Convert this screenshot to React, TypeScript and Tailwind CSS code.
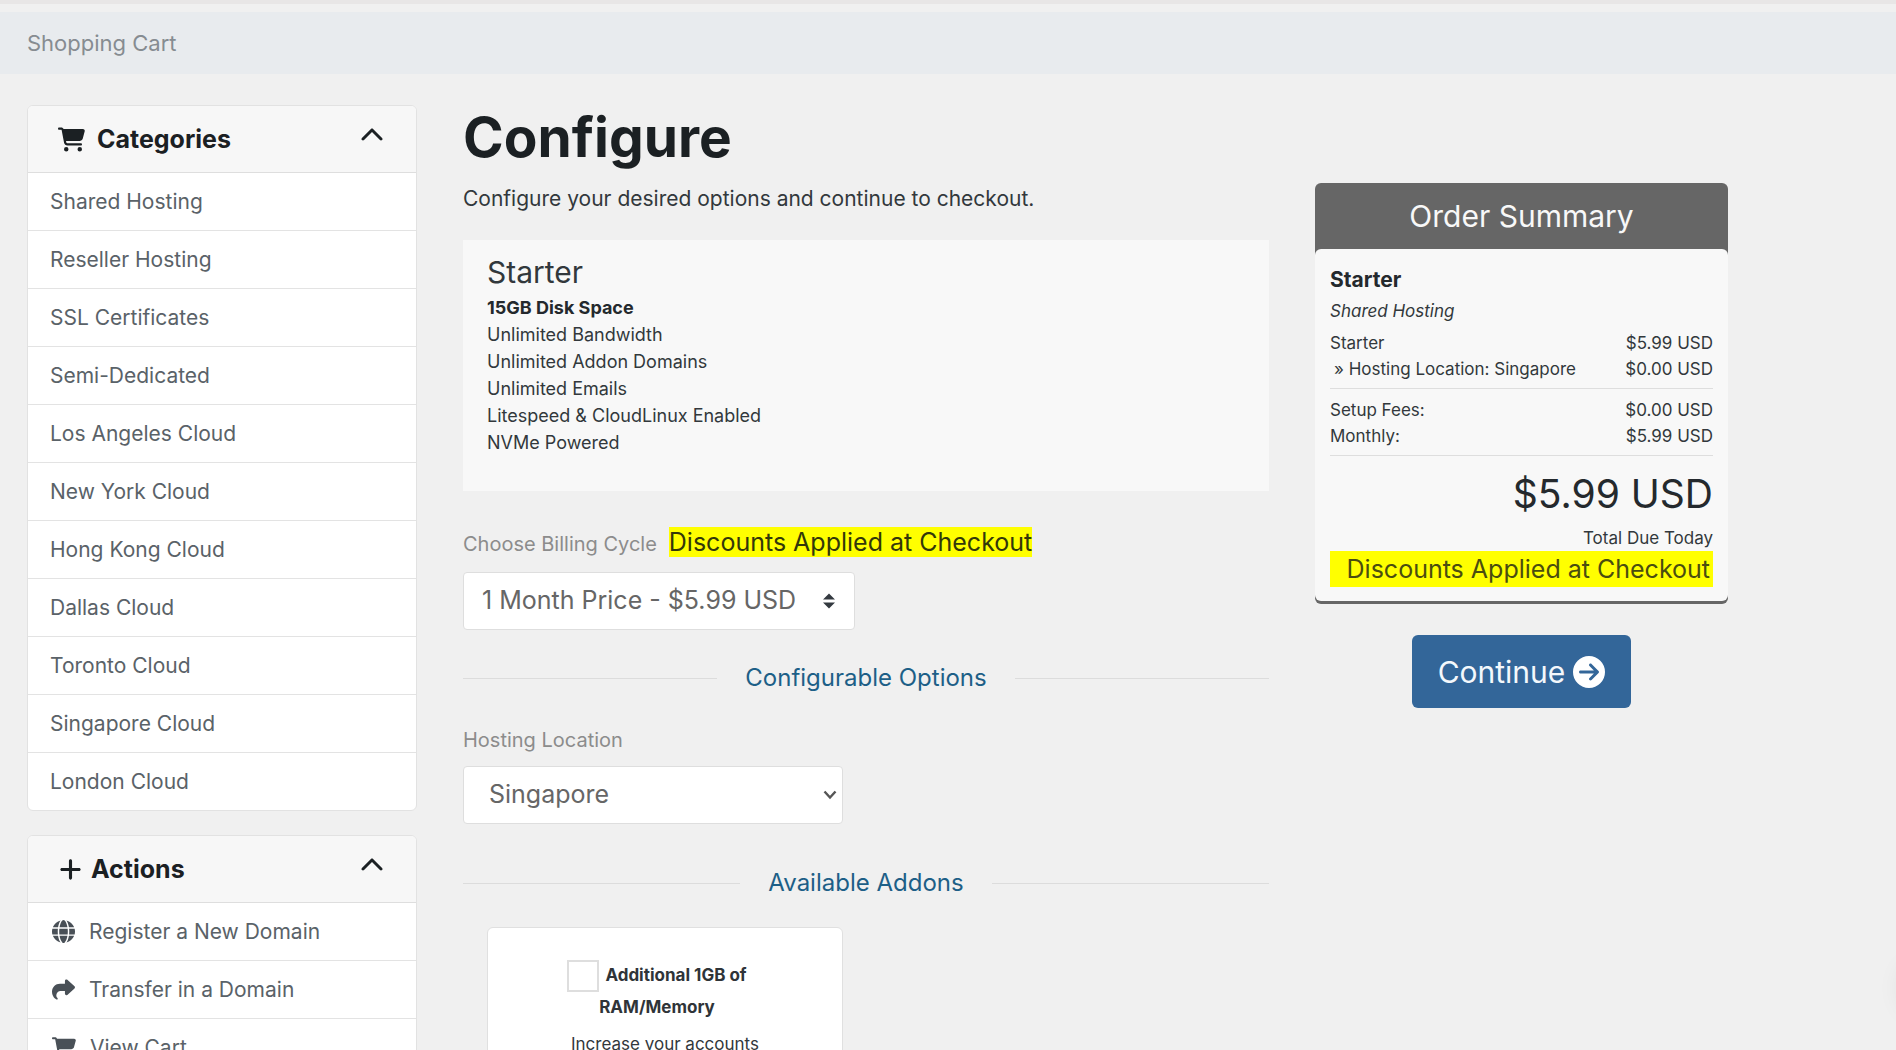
import type { ReactNode } from 'react';
import {
  FaCartShopping,
  FaChevronUp,
  FaCircleArrowRight,
  FaGlobe,
  FaPlus,
  FaShare,
} from 'react-icons/fa6';

const categories = [
  'Shared Hosting',
  'Reseller Hosting',
  'SSL Certificates',
  'Semi-Dedicated',
  'Los Angeles Cloud',
  'New York Cloud',
  'Hong Kong Cloud',
  'Dallas Cloud',
  'Toronto Cloud',
  'Singapore Cloud',
  'London Cloud',
];

const actions = [
  { label: 'Register a New Domain', icon: <FaGlobe className="size-[23px]" /> },
  { label: 'Transfer in a Domain', icon: <FaShare className="size-[23px]" /> },
  { label: 'View Cart', icon: <FaCartShopping className="size-6" /> },
];

const features = [
  'Unlimited Bandwidth',
  'Unlimited Addon Domains',
  'Unlimited Emails',
  'Litespeed & CloudLinux Enabled',
  'NVMe Powered',
];

function SideCard({ icon, title, children }: { icon: ReactNode; title: string; children: ReactNode }) {
  return (
    <section className="overflow-hidden rounded-md border border-[#e2e2e2] bg-white">
      <h2 className="border-b border-[#dedede] bg-[#f7f7f7] text-[25px] leading-[66px] font-bold text-[#1b2023]">
        <button type="button" className="flex w-full items-center pr-8 pl-[30px] text-left">
          {icon}
          <span className="grow">{title}</span>
          <FaChevronUp className="mb-1.5 size-6" />
        </button>
      </h2>
      <ul className="divide-y divide-[#e3e3e3] text-[21px] text-[#5a6268]">{children}</ul>
    </section>
  );
}

function Divider({ children }: { children: ReactNode }) {
  return (
    <h2 className="flex items-center gap-7 text-2xl leading-8 text-[#1d5f87] before:h-px before:flex-1 before:bg-[#dcdcdc] after:h-px after:flex-1 after:bg-[#dcdcdc]">
      {children}
    </h2>
  );
}

function SummaryRow({ label, value }: { label: ReactNode; value: string }) {
  return (
    <div className="flex justify-between">
      <dt>{label}</dt>
      <dd>{value}</dd>
    </div>
  );
}

export default function App() {
  return (
    <div className="relative h-screen overflow-hidden bg-[#f0f0f0] font-[Inter,sans-serif] text-[#32383c]">
      <div className="h-1 bg-[#e8e6e6]" />
      <nav aria-label="Breadcrumb" className="mt-2 bg-[#e8ebee] px-[27px] pt-px text-[22px] leading-[61px] text-[#868c91]">
        Shopping Cart
      </nav>

      <div className="mt-[31px] grid grid-cols-[390fr_806fr_413fr] items-start gap-[46px] pr-[168px] pl-[27px]">
        <aside className="grid gap-6">
          <SideCard icon={<FaCartShopping className="mr-3 size-[27px]" />} title="Categories">
            {categories.map((name) => (
              <li key={name}>
                <a href="#" className="block px-[22px] leading-[57px]">{name}</a>
              </li>
            ))}
          </SideCard>
          <SideCard icon={<FaPlus className="mr-2 size-[25px]" />} title="Actions">
            {actions.map(({ label, icon }) => (
              <li key={label}>
                <a href="#" className="flex items-center gap-3.5 px-6 leading-[57px]">
                  <span className="text-[#495057]">{icon}</span>
                  {label}
                </a>
              </li>
            ))}
          </SideCard>
        </aside>

        <main>
          <h1 className="text-[55px] leading-16 font-bold text-[#1b2023]">Configure</h1>
          <p className="mt-3.5 text-[21px] leading-8">Configure your desired options and continue to checkout.</p>

          <section className="mt-[25px] bg-[#f8f8f8] px-6 pt-3.5 pb-[35px]">
            <h2 className="text-3xl leading-9">Starter</h2>
            <div className="mt-1 text-lg leading-[27px]">
              <p className="font-bold text-[#24292d]">15GB Disk Space</p>
              {features.map((feature) => (
                <p key={feature}>{feature}</p>
              ))}
            </div>
          </section>

          <div className="mt-[33px] flex items-baseline gap-3 leading-9">
            <label htmlFor="cycle" className="text-xl leading-9 text-[#8c8c8c]">Choose Billing Cycle</label>
            <p className="text-[25px] leading-9">
              <mark className="bg-[#ffff00] text-[#33380a]">Discounts Applied at Checkout</mark>
            </p>
          </div>
          <div className="relative mt-2.5 w-[392px] max-w-full">
            <select
              id="cycle"
              className="h-[58px] w-full appearance-none rounded-sm border border-[#dedede] bg-white pr-12 pl-[18px] text-[25px] text-[#666]"
            >
              <option>1 Month Price - $5.99 USD</option>
            </select>
            <svg viewBox="0 0 4 5" className="pointer-events-none absolute inset-y-0 right-5 my-auto h-4 w-3 text-[#343a40]" aria-hidden="true">
              <path fill="currentColor" d="M2 0 0 2h4zm0 5L0 3h4z" />
            </svg>
          </div>

          <div className="mt-8">
            <Divider>Configurable Options</Divider>
          </div>

          <label htmlFor="location" className="mt-8 block text-xl leading-7 text-[#8c8c8c]">Hosting Location</label>
          <div className="relative mt-3 w-[380px] max-w-full">
            <select
              id="location"
              className="h-[58px] w-full appearance-none rounded-sm border border-[#dedede] bg-white pr-10 pl-[25px] text-[25px] text-[#666]"
            >
              <option>Singapore</option>
            </select>
            <svg viewBox="0 0 14 10" className="pointer-events-none absolute inset-y-0 right-1.5 my-auto h-2.5 w-3.5 text-[#555]" aria-hidden="true">
              <path fill="none" stroke="currentColor" strokeWidth="2.4" d="m1.500 1.500 5.500 6 5.500-6" />
            </svg>
          </div>

          <div className="mt-[43px]">
            <Divider>Available Addons</Divider>
          </div>

          <section className="mt-7 ml-6 w-[356px] max-w-full rounded-md border border-[#e0e0e0] bg-white px-[70px] pt-8 pb-12 text-center text-[17px]">
            <label className="block pr-4 leading-[31px] font-bold text-[#2f3438]">
              <input type="checkbox" className="mr-1.5 size-8 appearance-none border-2 border-[#dedede] bg-white align-middle" />
              Additional 1GB of
              <br />
              RAM/Memory
            </label>
            <p className="mt-2 leading-[26px] whitespace-nowrap">Increase your accounts</p>
          </section>
        </main>

        <aside className="pt-[78px]">
          <section className="rounded-md bg-[#666] pb-[3px]">
            <h2 className="text-center text-3xl leading-[66px] text-[#f8f8f8]">Order Summary</h2>
            <div className="rounded-md bg-[#f8f8f8] px-[15px] pt-[17px] pb-3.5 text-[17px] leading-[26px]">
              <h3 className="text-[21px] leading-7 font-bold text-[#24292d]">Starter</h3>
              <p className="mt-1 italic">Shared Hosting</p>
              <dl className="mt-1.5">
                <SummaryRow label="Starter" value="$5.99 USD" />
                <SummaryRow label={<span className="pl-1">» Hosting Location: Singapore</span>} value="$0.00 USD" />
              </dl>
              <dl className="mt-1.5 border-y border-[#dedede] pt-2 pb-1.5">
                <SummaryRow label="Setup Fees:" value="$0.00 USD" />
                <SummaryRow label="Monthly:" value="$5.99 USD" />
              </dl>
              <p className="mt-3.5 text-right text-[39px] leading-12 text-[#24292d]">$5.99 USD</p>
              <p className="mt-[7px] text-right">Total Due Today</p>
              <p className="bg-[#ffff00] pr-[3px] text-right text-[25px] leading-9 text-[#4a4d10]">
                Discounts Applied at Checkout
              </p>
            </div>
          </section>
          <div className="mt-[31px] flex justify-center">
            <button type="button" className="flex h-[73px] items-center gap-2 rounded-md bg-[#336699] px-[26px] text-3xl text-[#f4f8fc]">
              Continue
              <FaCircleArrowRight className="size-8 text-white" />
            </button>
          </div>
        </aside>
      </div>

      <div className="absolute -right-16 bottom-8 size-15 rounded-full shadow-[0_0_24px_rgba(0,0,0,0.08)]" />
    </div>
  );
}
